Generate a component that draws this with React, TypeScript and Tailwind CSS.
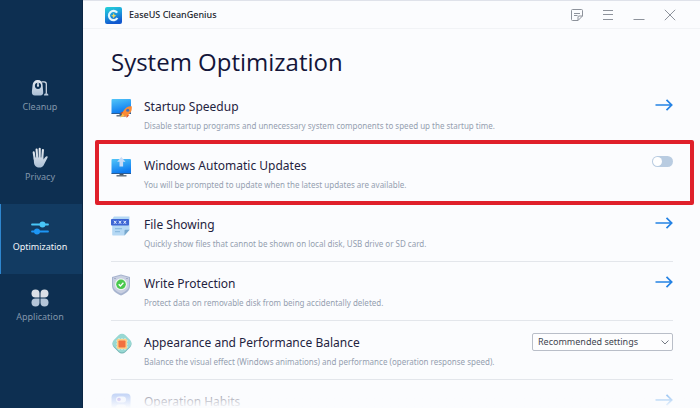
import { useState, type ReactNode } from 'react';

function CleanupIcon() {
  return (
    <svg viewBox="0 0 18 18" className="size-[18px]" aria-hidden="true">
      <defs>
        <linearGradient id="vac" x1="0" y1="0" x2="0" y2="1">
          <stop offset="0" stopColor="#e6ebf1" />
          <stop offset="1" stopColor="#a9bed4" />
        </linearGradient>
      </defs>
      <path d="M6.800 1C3.800 1 1.900 3 1.600 6L.9 12.600c-.3 2.600.9 3.900 3 3.900h5.500c2 0 3-1.300 2.800-3.400L11.600 6C11.400 3 9.800 1 6.800 1Z" fill="url(#vac)" />
      <circle cx="7" cy="6.800" r="3.100" fill="#0d3052" />
      <path d="M7 3.500v3.300" stroke="#d5dee8" strokeWidth="1.600" />
      <circle cx="7" cy="6.800" r="1.100" fill="#d5dee8" />
      <path d="M10.500 2.900h2.600c1.500 0 2.200.8 2.200 2.200v9.600" fill="none" stroke="#d5dee8" strokeWidth="1.200" />
      <path d="M13 16.500c0-1.300.9-2.200 2.200-2.200s2.200.9 2.200 2.200Z" fill="#b7c8da" />
    </svg>
  );
}

function HandIcon() {
  return (
    <svg viewBox="0 0 18 22" className="h-[22px] w-[18px]" aria-hidden="true">
      <defs>
        <linearGradient id="hand" gradientUnits="userSpaceOnUse" x1="0" y1="0" x2="0" y2="22">
          <stop offset="0" stopColor="#eef1f5" />
          <stop offset="1" stopColor="#a6bcd3" />
        </linearGradient>
      </defs>
      <g stroke="url(#hand)" strokeWidth="2.100" strokeLinecap="round" fill="none">
        <path d="M2.700 5.300 3.700 12M5.600 2.500 6.200 11M8.701 1.800 8.700 11M11.900 3 11.200 12" />
      </g>
      <path d="M2.700 10.500h9.500l.2 2 2-2.500c.6-.8 1.700-.9 2.100-.4.300.4.200.8-.1 1.300l-3.100 6c-1.200 2.500-2.500 3.700-5.100 3.700-3.600 0-5.200-2.400-5.300-6Z" fill="url(#hand)" />
    </svg>
  );
}

function SlidersIcon() {
  return (
    <svg viewBox="0 0 18 16" className="h-4 w-[18px]" aria-hidden="true">
      <path d="M1 4.500h16" stroke="#48c6f8" strokeWidth="1.800" strokeLinecap="round" />
      <circle cx="11.500" cy="4.500" r="3" fill="#48c6f8" />
      <path d="M1 11.500h16" stroke="#1d96f5" strokeWidth="1.800" strokeLinecap="round" />
      <circle cx="6" cy="11.500" r="3" fill="#1d96f5" />
    </svg>
  );
}

function CloverIcon() {
  return (
    <svg viewBox="0 0 18 18" className="size-[18px]" aria-hidden="true">
      <g fill="#dbe0e7">
        <path d="M4.500.5a4 4 0 0 1 4 4v4h-4a4 4 0 0 1 0-8Z" />
        <path d="M13.500.5a4 4 0 0 0-4 4v4h4a4 4 0 0 0 0-8Z" />
      </g>
      <g fill="#b4c5d8">
        <path d="M4.500 17.500a4 4 0 0 0 4-4v-4h-4a4 4 0 0 0 0 8Z" />
        <path d="M13.500 17.500a4 4 0 0 1-4-4v-4h4a4 4 0 0 1 0 8Z" />
      </g>
    </svg>
  );
}

function Logo() {
  return (
    <svg viewBox="0 0 17 17" className="size-[17px]" aria-hidden="true">
      <defs>
        <linearGradient id="logo" x1="0" y1="0" x2="0.300" y2="1">
          <stop offset="0" stopColor="#25d3d8" />
          <stop offset="0.500" stopColor="#1c9ddc" />
          <stop offset="1" stopColor="#1158cf" />
        </linearGradient>
      </defs>
      <rect width="17" height="17" rx="2" fill="url(#logo)" />
      <path d="M12.200 5.700A4.600 4.600 0 1 0 12.400 11" fill="none" stroke="#e4f7ff" strokeWidth="2.200" />
      <path d="m8.700 6 .8 1.900 1.900.8-1.900.8-.8 1.900-.8-1.900L6 8.700l1.900-.8Z" fill="#f2d65c" />
    </svg>
  );
}

function Monitor({ id }: { id: string }) {
  return (
    <>
      <defs>
        <linearGradient id={id} x1="0" y1="0" x2="0.300" y2="1">
          <stop offset="0" stopColor="#52c6f8" />
          <stop offset="1" stopColor="#0b78f0" />
        </linearGradient>
      </defs>
      <rect x="8.500" y="15" width="4" height="2.500" fill="#4b5a6b" />
      <path d="M5.500 17.800h10" stroke="#5c6a78" strokeWidth="1.400" />
      <rect x=".5" y="1" width="19.500" height="15" rx="1" fill={`url(#${id})`} />
      <path d="M.5 15.500h19.500" stroke="#2a5c94" strokeWidth="1" />
    </>
  );
}

function StartupIcon() {
  return (
    <svg viewBox="0 0 21 20" className="h-5 w-[21px]" aria-hidden="true">
      <Monitor id="screenA" />
      <path d="m12 14-3 1.500 3.500.2Zm4 3.500-.5 2.500 3-3Z" fill="#e8541c" />
      <path d="M20.700 8.300c-4-.2-6.600 1.500-8.600 5.200l-1.400 3 2.400 2.200 3.200-1.200c3.500-2 5-5 4.400-9.200Z" fill="#fb8a34" />
      <path d="m11.500 15.500-2.300 4 4.300-1.500Z" fill="#ffbd46" />
      <path d="m12 13.500-2.600 1.600 2-.1Zm4.200 3.800-1.200 2.200 2.800-2.700Z" fill="#d9481a" />
      <circle cx="16.700" cy="12.300" r="1.500" fill="#4c6fae" />
    </svg>
  );
}

function UpdatesIcon() {
  return (
    <svg viewBox="0 0 21 20" className="h-5 w-[21px]" aria-hidden="true">
      <g transform="translate(0 1)"><Monitor id="screenB" /></g>
      <path d="m10.300 0 4.200 4.800h-2.400v4.700H8.500V4.800H6.100Z" fill="#c9dcf7" />
    </svg>
  );
}

function FileIcon() {
  return (
    <svg viewBox="0 0 21 20" className="h-5 w-[21px]" aria-hidden="true">
      <path d="M3 .5h15.500v13.500l-5 5.500H2a.8.8 0 0 1-.8-.8V3Z" fill="#b5d8f4" />
      <path d="M18.500 13.800h-4a1 1 0 0 0-1 1v4.700Z" fill="#78a8cd" />
      <path d="M4 12.700h7M4 15.700h5" stroke="#8dbbe0" strokeWidth="1.200" />
      <rect y="3" width="18" height="6.500" rx=".8" fill="#3e66d4" />
      <path d="m3 4.800 2.400 3m0-3-2.400 3m4.800-3 2.400 3m0-3-2.400 3m4.800-3 2.400 3m0-3-2.400 3" stroke="#e8f0ff" strokeWidth="1" />
    </svg>
  );
}

function ShieldIcon() {
  return (
    <svg viewBox="0 0 20 22" className="h-[22px] w-5" aria-hidden="true">
      <path d="M10 .5 19 3v9c0 4.500-4 7.500-9 9.500-5-2-9-5-9-9.500V3Z" fill="#a7b4cf" />
      <path d="M10 1.500 18 3.700V11c0 4-3.500 6.700-8 8.600C5.500 17.700 2 15 2 11V3.700Z" fill="#c8cfe1" />
      <circle cx="10" cy="10.300" r="6" fill="#edf4f0" />
      <circle cx="10" cy="10.300" r="4.800" fill="#49c94e" />
      <path d="m7.700 10.300 1.700 1.700 3-3.200" fill="none" stroke="#fff" strokeWidth="1.300" />
      <path d="M3.500 4.500h1m11 0h1" stroke="#7f8cac" />
    </svg>
  );
}

function ChipIcon() {
  return (
    <svg viewBox="0 0 22 22" className="size-[22px]" aria-hidden="true">
      <rect x="3" y="3" width="16" height="16" rx="4.500" transform="rotate(45 11 11)" fill="#6fb1b0" />
      <rect x="3" y="3" width="16" height="16" rx="4.500" transform="rotate(45 11 11) translate(-.6 -.6)" fill="#98d8d3" />
      <path d="M8 5.200v11.600M11 5.200v11.600M14 5.200v11.600M5.200 8h11.600M5.200 11h11.600M5.200 14h11.600" stroke="#fff3d6" strokeWidth="1.200" />
      <rect x="6" y="6" width="10" height="10" rx="1" fill="#fbd08a" />
      <rect x="7.500" y="7.500" width="7" height="7" rx=".8" fill="#f2703e" />
    </svg>
  );
}

function HabitsIcon() {
  return (
    <svg viewBox="0 0 20 20" className="size-5" aria-hidden="true">
      <rect x=".5" y=".5" width="19" height="19" rx="4" fill="#86a8ee" />
      <rect x="5" y="3.500" width="10" height="6" rx="3" fill="#e6edfd" />
      <circle cx="8" cy="6.500" r="1.800" fill="#8067dd" />
      <rect x="5" y="11.500" width="10" height="5" rx="2.500" fill="#e6edfd" />
    </svg>
  );
}

function Arrow({ label }: { label: string }) {
  return (
    <button type="button" aria-label={label} className="flex h-4 items-center">
      <svg viewBox="0 0 18 12" className="h-3 w-[18px]" fill="none" stroke="#2482e4" strokeWidth="1.700" aria-hidden="true">
        <path d="M.5 6h16M11.500.8 16.700 6l-5.200 5.200" />
      </svg>
    </button>
  );
}

function NavItem({ icon, label, active }: { icon: ReactNode; label: string; active?: boolean }) {
  return (
    <button
      type="button"
      aria-current={active ? 'page' : undefined}
      className={
        'flex h-[70px] w-full flex-col items-center border-l pt-3 pr-[3px] text-[9px] leading-4 ' +
        (active ? 'border-[#2e86cf] bg-[#123b62] text-[#f1f5f9]' : 'border-transparent text-[#8296ab]')
      }
    >
      <span className="flex h-[23px] items-center">{icon}</span>
      <span>{label}</span>
    </button>
  );
}

type RowProps = { icon: ReactNode; title: string; text?: string; control: ReactNode; highlight?: boolean };

function Row({ icon, title, text, control, highlight }: RowProps) {
  return (
    <li className="relative flex h-[59px] items-start border-b border-[#e3e6eb] pt-3">
      <span className="flex h-[22px] w-[33px] shrink-0 items-center">{icon}</span>
      <div className="min-w-0 flex-1">
        <h2 className="text-[12px] leading-5 text-[#1f2340]">{title}</h2>
        {text && <p className="text-[8px] leading-[18px] whitespace-nowrap text-[#959fb0]">{text}</p>}
      </div>
      {control}
      {highlight && <div className="pointer-events-none absolute -top-1 -right-[21px] -bottom-[3px] -left-4 z-10 rounded-xs border-4 border-[#e0202a]" />}
    </li>
  );
}

export default function App() {
  const [auto, setAuto] = useState(false);
  return (
    <div className="flex h-screen overflow-hidden bg-[#fbfcfe] font-['Noto_Sans',sans-serif]">
      <nav aria-label="Main" className="w-[83px] shrink-0 border-r border-[#0a2644] bg-[#0d2f51] pt-16">
        <NavItem icon={<CleanupIcon />} label="Cleanup" />
        <NavItem icon={<HandIcon />} label="Privacy" />
        <NavItem icon={<SlidersIcon />} label="Optimization" active />
        <NavItem icon={<CloverIcon />} label="Application" />
      </nav>
      <div className="flex min-w-0 flex-1 flex-col border-t border-[#dfe2ea]">
        <header className="flex h-7 shrink-0 items-center border-b border-[#f1f3f6] pt-px pr-6 pl-[22px]">
          <Logo />
          <span className="ml-[7px] flex-1 text-[9px] font-medium text-[#22262e]">EaseUS CleanGenius</span>
          <div className="flex items-center gap-[19px] text-[#8d929b]">
            <button type="button" aria-label="Feedback">
              <svg viewBox="0 0 12 12" className="size-3" fill="none" stroke="currentColor" aria-hidden="true">
                <path d="M11.500 7V1.500a1 1 0 0 0-1-1h-9a1 1 0 0 0-1 1v9a1 1 0 0 0 1 1H7L11.500 7H8a1 1 0 0 0-1 1v3.500M3 4.500h6M3 6.500h3.500" />
              </svg>
            </button>
            <button type="button" aria-label="Menu">
              <svg viewBox="0 0 12 12" className="size-3" stroke="currentColor" aria-hidden="true">
                <path d="M1 1.500h10M1 5.500h10M1 10.500h10" />
              </svg>
            </button>
            <button type="button" aria-label="Minimize">
              <svg viewBox="0 0 12 12" className="size-3" stroke="currentColor" aria-hidden="true">
                <path d="M.5 10.500h11" />
              </svg>
            </button>
            <button type="button" aria-label="Close">
              <svg viewBox="0 0 12 12" className="size-3" stroke="currentColor" aria-hidden="true">
                <path d="m.8.8 10.400 10.400m0-10.400L.8 11.200" />
              </svg>
            </button>
          </div>
        </header>
        <main className="relative min-h-0 flex-1 overflow-hidden pr-[27px] pl-7">
          <h1 className="pt-[17px] pb-[7px] font-['Open_Sans','Noto_Sans',sans-serif] text-[24px] leading-8 text-[#14163a]">System Optimization</h1>
          <ul>
            <Row icon={<StartupIcon />} title="Startup Speedup" text="Disable startup programs and unnecessary system components to speed up the startup time." control={<Arrow label="Open Startup Speedup" />} />
            <Row
              icon={<UpdatesIcon />}
              title="Windows Automatic Updates"
              text="You will be prompted to update when the latest updates are available."
              highlight
              control={
                <input
                  type="checkbox"
                  role="switch"
                  aria-label="Windows Automatic Updates"
                  checked={auto}
                  onChange={(e) => setAuto(e.target.checked)}
                  className="flex h-[11px] w-[21px] appearance-none items-center rounded-full bg-[#b9cce1] px-px before:size-[9px] before:rounded-full before:bg-white checked:justify-end checked:bg-[#2482e4]"
                />
              }
            />
            <Row icon={<FileIcon />} title="File Showing" text="Quickly show files that cannot be shown on local disk, USB drive or SD card." control={<Arrow label="Open File Showing" />} />
            <Row icon={<ShieldIcon />} title="Write Protection" text="Protect data on removable disk from being accidentally deleted." control={<Arrow label="Open Write Protection" />} />
            <Row
              icon={<ChipIcon />}
              title="Appearance and Performance Balance"
              text="Balance the visual effect (Windows animations) and performance (operation response speed)."
              control={
                <div className="grid w-[141px] items-center">
                  <select aria-label="Appearance and Performance Balance" className="col-start-1 row-start-1 h-[18px] appearance-none rounded-xs border border-[#b9bec8] bg-[#fdfdfe] px-[5px] text-[9px] leading-4 text-[#3f4550]">
                    <option>Recommended settings</option>
                  </select>
                  <svg viewBox="0 0 8 5" className="pointer-events-none col-start-1 row-start-1 mr-1 h-[5px] w-2 justify-self-end" fill="none" stroke="#747a84" aria-hidden="true">
                    <path d="m.5.5 3.500 3.500L7.500.5" />
                  </svg>
                </div>
              }
            />
            <Row icon={<HabitsIcon />} title="Operation Habits" control={<Arrow label="Open Operation Habits" />} />
          </ul>
          <div className="pointer-events-none absolute inset-x-0 bottom-0 z-20 h-6 bg-linear-to-b from-[#fbfcfe]/20 to-[#fbfcfe]" />
        </main>
      </div>
    </div>
  );
}
